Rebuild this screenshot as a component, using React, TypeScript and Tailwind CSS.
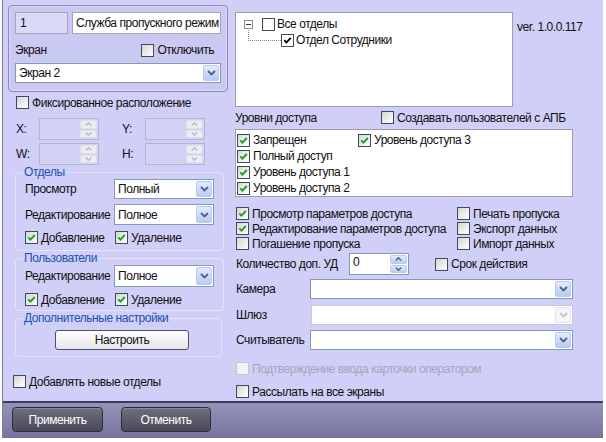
import React from "react";

type CbProps = { checked?: boolean; disabled?: boolean; flat?: boolean };

function Cb({ checked, disabled, flat }: CbProps) {
  if (flat) {
    return (
      <span className="w-[13px] h-[13px] shrink-0 border border-[#4a4a4a] bg-white flex items-center justify-center">
        {checked && (
          <svg width="11" height="11" viewBox="0 0 11 11">
            <path d="M2.3 5.2 L4.4 7.4 L8.8 2.8" stroke="#000" strokeWidth="1.7" fill="none" />
          </svg>
        )}
      </span>
    );
  }
  return (
    <span
      className={
        "w-[13px] h-[13px] shrink-0 border flex items-center justify-center " +
        (disabled
          ? "border-[#c4c4d4] bg-[#f4f4f8]"
          : "border-[#3b4a66] bg-gradient-to-br from-[#d6d6d0] to-white")
      }
    >
      {checked && (
        <svg width="11" height="11" viewBox="0 0 11 11">
          <path d="M2.3 5.4 L4.4 7.6 L8.8 3" stroke="#21a121" strokeWidth="1.9" fill="none" />
        </svg>
      )}
    </span>
  );
}

function Chevron({ color }: { color: string }) {
  return (
    <svg width="9" height="6" viewBox="0 0 9 6">
      <path d="M1 1 L4.5 4.5 L8 1" stroke={color} strokeWidth="1.8" fill="none" />
    </svg>
  );
}

function Select({ w, h, value, disabled }: { w: string; h: string; value?: string; disabled?: boolean }) {
  return (
    <div
      className={
        "flex items-stretch bg-white border " +
        w +
        " " +
        h +
        " " +
        (disabled ? "border-[#c8c8d8]" : "border-[#7f9db9]")
      }
    >
      <div className="flex-1 flex items-center pl-[3px] overflow-hidden whitespace-nowrap">{value}</div>
      <div
        className={
          "w-[16px] m-[1px] rounded-[2px] border flex items-center justify-center " +
          (disabled
            ? "border-[#e4e4ea] bg-[#f6f6f8]"
            : "border-[#b9c9ef] bg-gradient-to-b from-[#e2eafe] to-[#b8cbf6]")
        }
      >
        <Chevron color={disabled ? "#c4c4cc" : "#4d6185"} />
      </div>
    </div>
  );
}

function Spinner({ w, value, disabled }: { w: string; value?: string; disabled?: boolean }) {
  return (
    <div
      className={
        "flex items-stretch h-[22px] border " +
        w +
        " " +
        (disabled ? "border-[#b4b4cc] bg-[#d2d2f4]" : "border-[#7f9db9] bg-white")
      }
    >
      <div className="flex-1 flex items-start pt-[1px] pl-[3px]">{value}</div>
      <div className="w-[17px] m-[1px] flex flex-col gap-[1px]">
        {[true, false].map((up) => (
          <div
            key={String(up)}
            className={
              "flex-1 rounded-[2px] border flex items-center justify-center " +
              (disabled
                ? "border-[#e0e0ea] bg-[#ececf2]"
                : "border-[#b9c9ef] bg-gradient-to-b from-[#e2eafe] to-[#b8cbf6]")
            }
          >
            <svg width="7" height="4" viewBox="0 0 7 4">
              <path
                d={up ? "M0.8 3.5 L3.5 0.8 L6.2 3.5" : "M0.8 0.5 L3.5 3.2 L6.2 0.5"}
                stroke={disabled ? "#b8b8c4" : "#4d6185"}
                strokeWidth="1.4"
                fill="none"
              />
            </svg>
          </div>
        ))}
      </div>
    </div>
  );
}

function CheckLabel({
  label,
  checked,
  disabled,
  className,
}: {
  label: string;
  checked?: boolean;
  disabled?: boolean;
  className?: string;
}) {
  return (
    <div className={"flex items-center gap-[3px] whitespace-nowrap " + (className || "")}>
      <Cb checked={checked} disabled={disabled} />
      <span className={disabled ? "text-[#a4a4bc]" : ""}>{label}</span>
    </div>
  );
}

export default function App() {
  return (
    <div className="w-[606px] h-[442px] bg-white overflow-hidden font-['Liberation_Sans',Arial,sans-serif] text-[12px] tracking-[-0.45px] leading-[14px] text-[#101010]">
      <div className="ml-[2px] w-[601px] h-[438px] border-l border-[#7c7c94] flex flex-col">
        <div className="h-[401px] bg-[#cfcff7] flex">
          {/* Left column */}
          <div className="w-[227px] shrink-0 flex flex-col">
            <div className="mt-[5px] ml-[5px] w-[220px] h-[87px] rounded-[4px] border border-[#8a8ab4] bg-[#c9c9f1] shadow-[inset_0_0_0_1px_#dadaf8] px-[6px] pt-[6px]">
              <div className="flex gap-[4px]">
                <div className="w-[53px] h-[22px] border border-[#a4a4bc] bg-[#dadaf8] flex items-center pl-[4px]">1</div>
                <div className="w-[149px] h-[22px] border border-[#a4a4bc] bg-white flex items-center pl-[3px] overflow-hidden whitespace-nowrap">
                  Служба пропускного режим
                </div>
              </div>
              <div className="mt-[9px] h-[14px] flex items-center justify-between pr-[7px]">
                <span>Экран</span>
                <CheckLabel label="Отключить" />
              </div>
              <div className="mt-[6px]">
                <Select w="w-[206px]" h="h-[20px]" value="Экран 2" />
              </div>
            </div>

            <CheckLabel className="mt-[4px] ml-[13px] h-[13px]" label="Фиксированное расположение" />

            <div className="mt-[9px] ml-[13px] flex items-center h-[22px]">
              <span className="w-[23px]">X:</span>
              <Spinner w="w-[60px]" disabled />
              <span className="ml-[23px] w-[23px]">Y:</span>
              <Spinner w="w-[60px]" disabled />
            </div>
            <div className="mt-[3px] ml-[13px] flex items-center h-[22px]">
              <span className="w-[23px]">W:</span>
              <Spinner w="w-[60px]" disabled />
              <span className="ml-[23px] w-[23px]">H:</span>
              <Spinner w="w-[60px]" disabled />
            </div>

            <fieldset className="ml-[12px] w-[207px] h-[86px] border border-[#e4e4f4] rounded-[4px] px-[9px]">
              <legend className="ml-[-2px] px-[1px] text-[#1f4fb0] leading-[14px]">Отделы</legend>
              <div className="flex items-center h-[20px]">
                <span className="w-[89px]">Просмотр</span>
                <Select w="w-[100px]" h="h-[20px]" value="Полный" />
              </div>
              <div className="mt-[5px] flex items-center h-[21px]">
                <span className="w-[89px]">Редактирование</span>
                <Select w="w-[100px]" h="h-[21px]" value="Полное" />
              </div>
              <div className="mt-[6px] flex items-center h-[13px]">
                <CheckLabel className="w-[90px]" label="Добавление" checked />
                <CheckLabel label="Удаление" checked />
              </div>
            </fieldset>

            <fieldset className="ml-[12px] w-[207px] h-[60px] border border-[#e4e4f4] rounded-[4px] px-[9px]">
              <legend className="ml-[-2px] px-[1px] text-[#1f4fb0] leading-[14px]">Пользователи</legend>
              <div className="flex items-center h-[22px]">
                <span className="w-[89px]">Редактирование</span>
                <Select w="w-[100px]" h="h-[22px]" value="Полное" />
              </div>
              <div className="mt-[6px] flex items-center h-[13px]">
                <CheckLabel className="w-[90px]" label="Добавление" checked />
                <CheckLabel label="Удаление" checked />
              </div>
            </fieldset>

            <fieldset className="ml-[12px] w-[207px] h-[46px] border border-[#e4e4f4] rounded-[4px] px-[9px]">
              <legend className="ml-[-2px] px-[1px] text-[#1f4fb0] leading-[14px]">Дополнительные настройки</legend>
              <button className="mt-[5px] ml-[30px] w-[134px] h-[20px] rounded-[3px] border border-[#4e5068] bg-gradient-to-b from-white to-[#e4e4ea] flex items-center justify-center">
                Настроить
              </button>
            </fieldset>

            <CheckLabel className="mt-[18px] ml-[10px] h-[13px]" label="Добавлять новые отделы" />
          </div>

          {/* Right column */}
          <div className="ml-[5px] w-[365px] flex flex-col">
            <div className="mt-[12px] flex">
              <div className="w-[278px] h-[95px] border border-[#9c9cac] bg-white pt-[3px] pl-[8px]">
                <div className="flex items-center h-[16px]">
                  <span className="w-[9px] h-[9px] border border-[#8a8a8a] bg-white flex items-center justify-center">
                    <span className="w-[5px] h-[1px] bg-[#333]" />
                  </span>
                  <span className="ml-[9px]">
                    <Cb flat />
                  </span>
                  <span className="ml-[2px]">Все отделы</span>
                </div>
                <div className="flex items-center h-[16px]">
                  <span className="ml-[4px] w-[33px] h-[13px] -mt-[4px] self-start border-l border-b border-dotted border-[#8a8a8a]" />
                  <Cb flat checked />
                  <span className="ml-[2px]">Отдел Сотрудники</span>
                </div>
              </div>
              <div className="ml-[4px] mt-[8px] whitespace-nowrap">ver. 1.0.0.117</div>
            </div>

            <div className="mt-[4px] h-[13px] flex items-center">
              <span className="w-[146px]">Уровни доступа</span>
              <CheckLabel label="Создавать пользователей с АПБ" />
            </div>

            <div className="mt-[5px] w-[338px] h-[68px] border border-[#9c9cac] bg-white flex pt-[2px] pl-[1px]">
              <div className="w-[121px] flex flex-col">
                {["Запрещен", "Полный доступ", "Уровень доступа 1", "Уровень доступа 2"].map((t) => (
                  <CheckLabel key={t} className="h-[16px]" label={t} checked />
                ))}
              </div>
              <div className="flex flex-col">
                <CheckLabel className="h-[16px]" label="Уровень доступа 3" checked />
              </div>
            </div>

            <div className="mt-[9px] flex pl-[1px]">
              <div className="w-[221px] flex flex-col">
                <CheckLabel className="h-[15px]" label="Просмотр параметров доступа" checked />
                <CheckLabel className="h-[15px]" label="Редактирование параметров доступа" checked />
                <CheckLabel className="h-[15px]" label="Погашение пропуска" />
              </div>
              <div className="flex flex-col">
                <CheckLabel className="h-[15px]" label="Печать пропуска" />
                <CheckLabel className="h-[15px]" label="Экспорт данных" />
                <CheckLabel className="h-[15px]" label="Импорт данных" />
              </div>
            </div>

            <div className="mt-[2px] pl-[1px] flex items-center h-[22px]">
              <span className="w-[113px] whitespace-nowrap">Количество доп. УД</span>
              <Spinner w="w-[60px]" value="0" />
              <CheckLabel className="ml-[26px]" label="Срок действия" />
            </div>

            <div className="mt-[4px] pl-[1px] flex items-center">
              <span className="w-[74px]">Камера</span>
              <Select w="w-[263px]" h="h-[20px]" />
            </div>
            <div className="mt-[6px] pl-[1px] flex items-center">
              <span className="w-[75px]">Шлюз</span>
              <Select w="w-[262px]" h="h-[20px]" disabled />
            </div>
            <div className="mt-[5px] pl-[1px] flex items-center">
              <span className="w-[74px]">Считыватель</span>
              <Select w="w-[263px]" h="h-[20px]" />
            </div>

            <CheckLabel className="mt-[12px] ml-[1px] h-[13px]" label="Подтверждение ввода карточки оператором" disabled />
            <CheckLabel className="mt-[10px] ml-[1px] h-[13px]" label="Рассылать на все экраны" />
          </div>
        </div>

        <div className="h-[37px] border-t-2 border-[#3c3c5c] bg-gradient-to-b from-[#9494ba] to-[#74749e] flex items-start pt-[4px] pl-[9px] gap-[18px]">
          <button className="w-[91px] h-[25px] rounded-[4px] border border-[#2c2c3a] bg-gradient-to-b from-[#6e6e7e] to-[#4a4a58] text-white shadow-[inset_0_1px_0_#8a8a9a] flex items-center justify-center">
            Применить
          </button>
          <button className="w-[90px] h-[25px] rounded-[4px] border border-[#2c2c3a] bg-gradient-to-b from-[#6e6e7e] to-[#4a4a58] text-white shadow-[inset_0_1px_0_#8a8a9a] flex items-center justify-center">
            Отменить
          </button>
        </div>
      </div>
    </div>
  );
}
